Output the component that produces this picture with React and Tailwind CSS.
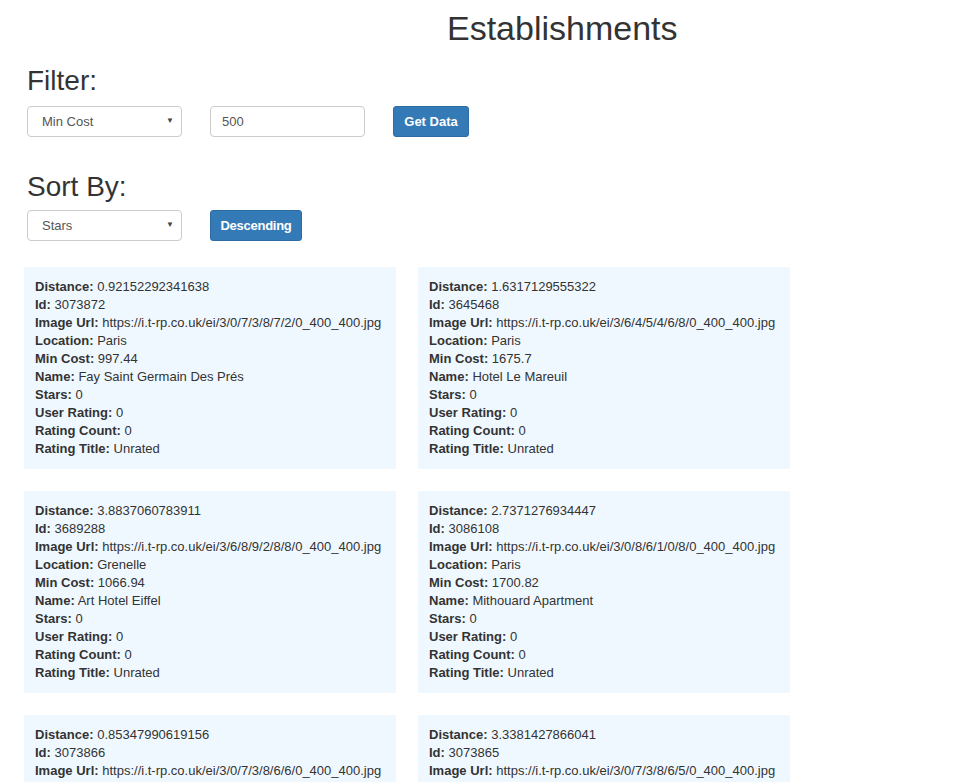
import React from 'react';

const establishments = [
  { distance: '0.92152292341638', id: '3073872', url: 'https://i.t-rp.co.uk/ei/3/0/7/3/8/7/2/0_400_400.jpg', location: 'Paris', minCost: '997.44', name: 'Fay Saint Germain Des Prés' },
  { distance: '1.6317129555322', id: '3645468', url: 'https://i.t-rp.co.uk/ei/3/6/4/5/4/6/8/0_400_400.jpg', location: 'Paris', minCost: '1675.7', name: 'Hotel Le Mareuil' },
  { distance: '3.8837060783911', id: '3689288', url: 'https://i.t-rp.co.uk/ei/3/6/8/9/2/8/8/0_400_400.jpg', location: 'Grenelle', minCost: '1066.94', name: 'Art Hotel Eiffel' },
  { distance: '2.7371276934447', id: '3086108', url: 'https://i.t-rp.co.uk/ei/3/0/8/6/1/0/8/0_400_400.jpg', location: 'Paris', minCost: '1700.82', name: 'Mithouard Apartment' },
  { distance: '0.85347990619156', id: '3073866', url: 'https://i.t-rp.co.uk/ei/3/0/7/3/8/6/6/0_400_400.jpg', location: 'Paris', minCost: '1120.5', name: 'Hotel Saint Germain' },
  { distance: '3.3381427866041', id: '3073865', url: 'https://i.t-rp.co.uk/ei/3/0/7/3/8/6/5/0_400_400.jpg', location: 'Paris', minCost: '1480.2', name: 'Hotel Eiffel Seine' },
];

function Select({ value }) {
  return (
    <div className="relative w-[155px] h-[31px]">
      <select
        defaultValue={value}
        className="appearance-none w-full h-full rounded-[4px] border border-[#ccc] bg-white pl-[14px] pr-6 text-[13px] text-[#555] outline-none"
      >
        <option>{value}</option>
      </select>
      <span className="pointer-events-none absolute right-[8px] top-[9px] text-[8px] text-[#444]">▼</span>
    </div>
  );
}

function Row({ label, value }) {
  return (
    <div className="whitespace-nowrap">
      <b className="font-bold">{label}:</b> {value}
    </div>
  );
}

function Card({ e }) {
  return (
    <div className="w-[372px] bg-[#f0f8ff] p-[11px] text-[13px] leading-[18px] text-[#333]">
      <Row label="Distance" value={e.distance} />
      <Row label="Id" value={e.id} />
      <Row label="Image Url" value={e.url} />
      <Row label="Location" value={e.location} />
      <Row label="Min Cost" value={e.minCost} />
      <Row label="Name" value={e.name} />
      <Row label="Stars" value="0" />
      <Row label="User Rating" value="0" />
      <Row label="Rating Count" value="0" />
      <Row label="Rating Title" value="Unrated" />
    </div>
  );
}

export default function App() {
  return (
    <div className="min-h-screen bg-white font-['Liberation_Sans',Arial,sans-serif] text-[#333]">
      <h1 className="pl-[447px] pt-[8px] text-[34px] leading-[40px]">Establishments</h1>

      <div className="px-[27px]">
        <h2 className="mt-[16px] text-[28px] leading-[33px]">Filter:</h2>
        <div className="mt-[9px] flex items-center">
          <Select value="Min Cost" />
          <input
            defaultValue="500"
            className="ml-[28px] w-[155px] h-[31px] rounded-[4px] border border-[#ccc] bg-white pl-[11px] text-[13px] text-[#555] outline-none"
          />
          <button className="ml-[28px] w-[76px] h-[31px] rounded-[3px] border border-[#2e6da4] bg-[#337ab7] text-center text-[13px] font-bold text-white">
            Get Data
          </button>
        </div>

        <h2 className="mt-[33px] text-[28px] leading-[33px]">Sort By:</h2>
        <div className="mt-[7px] flex items-center">
          <Select value="Stars" />
          <button className="ml-[28px] w-[92px] h-[31px] rounded-[3px] border border-[#2e6da4] bg-[#337ab7] text-center text-[13px] font-bold tracking-[-0.02em] text-white">
            Descending
          </button>
        </div>
      </div>

      <div className="mt-[26px] ml-[24px] grid w-[766px] grid-cols-2 gap-[22px] pb-6">
        {establishments.map((e) => (
          <Card key={e.id} e={e} />
        ))}
      </div>
    </div>
  );
}
